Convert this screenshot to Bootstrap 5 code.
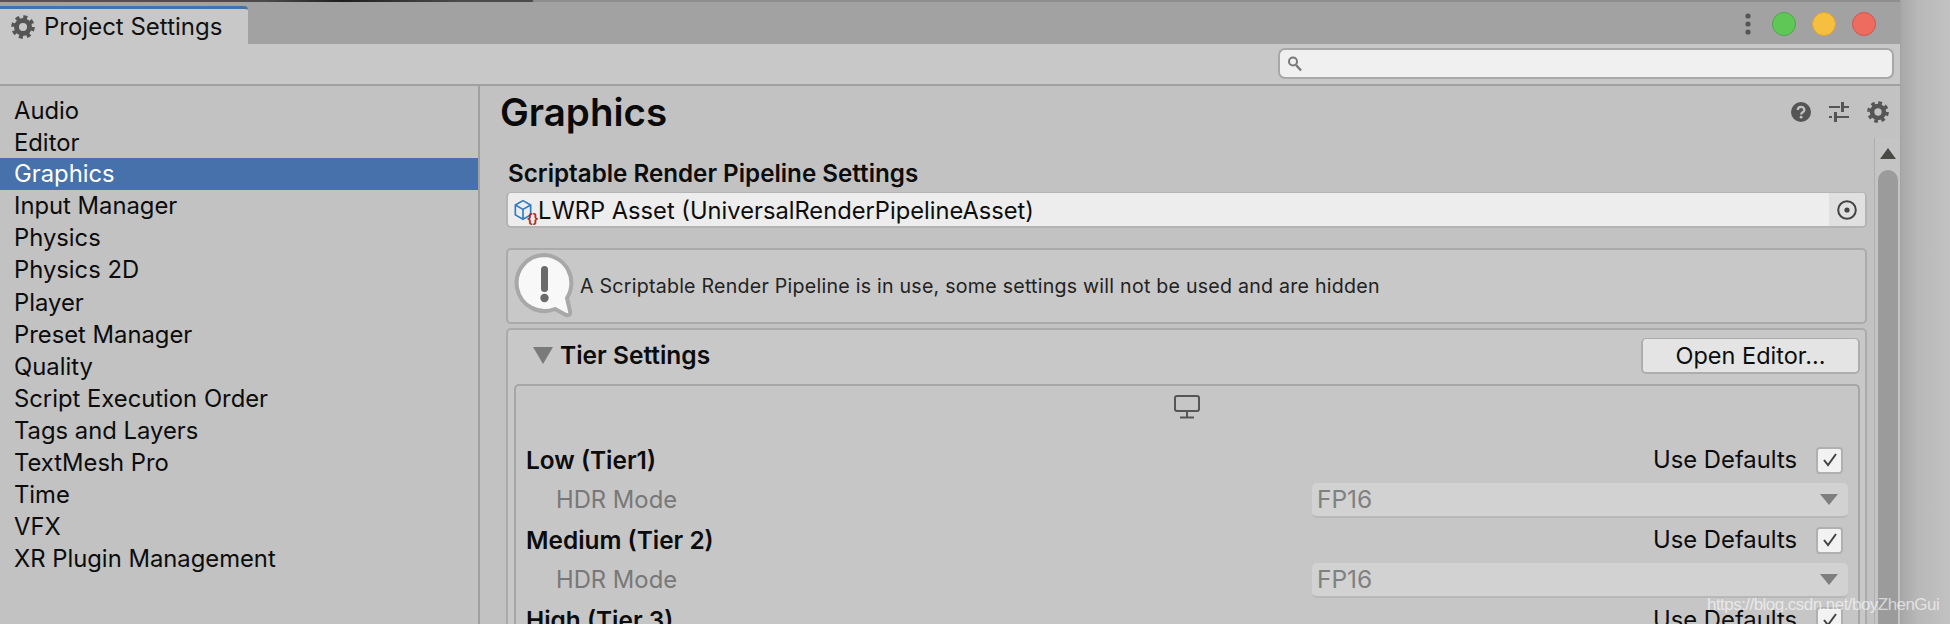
<!DOCTYPE html>
<html lang="en">
<head>
<meta charset="utf-8">
<title>Project Settings</title>
<link href="https://cdn.jsdelivr.net/npm/bootstrap@5.3.0/dist/css/bootstrap.min.css" rel="stylesheet">
<style>
html,body{height:624px;overflow:hidden}
body{font-family:Inter,"Liberation Sans",sans-serif;background:#c4c4c4;color:#0c0c0c}
.stage{height:624px;width:1950px}
.unity{width:1901px;height:624px;flex:none;background:#c2c2c2;border-right:1px solid #a3a3a3;overflow:hidden}
.desk{flex:1;background:linear-gradient(90deg,#a8a8a8,#b8b8b8 35%,#c2c2c2)}
.topstrip{height:2px;background:linear-gradient(90deg,#555 0,#4a4a4a 14%,#1e1e1e 18%,#4a4a4a 24%,#4a4a4a 28%,#8f8f8f 28.1%,#8f8f8f 100%)}
.tabbar{height:42px;background:#a2a2a2}
.tabitem{width:248px;height:38px;margin-top:4px;background:#c8c8c8;border-top:3px solid #4472ad;border-top-right-radius:4px;font-size:24px;line-height:30px;padding-left:11px;gap:9px;color:#111}
.winctl{gap:16px;padding-right:24px;height:44px}
.vdots{width:6px;height:22px;margin-right:5px}
.lamp{width:24px;height:24px;border-radius:50%;border:1px solid}
.lamp-g{background:#5fc756;border-color:#4ca845}
.lamp-y{background:#f6bf3f;border-color:#dca536}
.lamp-r{background:#ee6b60;border-color:#d2584e}
.toolstrip{height:42px;background:#c8c8c8;border-bottom:2px solid #a0a0a0;padding:4px 6px 0 0}
.seek{width:616px;height:31px;background:#f0f0f0;border:2px solid #a8a8a8;border-radius:7px;padding-left:7px}
.bodyrow{height:538px}
.sidelist{width:480px;flex:none;background:#c2c2c2;border-right:2px solid #a0a0a0;padding-top:9px;border-radius:0}
.sideitem{background:transparent;border:0;border-radius:0!important;padding:0 0 0 14px;height:32.1px;line-height:31px;font-size:23.8px;color:#0c0c0c}
.sideitem.active{background:#4671aa;color:#fff}
.pane{min-width:0}
.panehead{height:52px;padding:0 11px 0 20px}
.panetitle{font-size:38.5px;font-weight:600;margin:0;line-height:52px;color:#0a0a0a}
.headtools{gap:18px}
.scrollarea{min-height:0}
.inspector{padding:0 7px 0 26px;min-width:0}
.vbar{width:26px;flex:none;background:#c4c4c4;border-left:1px solid #aeaeae;padding:10px 2px 0 3px}
.vbar-up{width:0;height:0;border-left:8px solid transparent;border-right:8px solid transparent;border-bottom:11px solid #4a4a44;margin:0 auto 11px}
.vbar-thumb{height:500px;background:#9b9b9b;border-radius:10px 10px 0 0}
.seclabel{font-size:24.2px;font-weight:600;line-height:28px;padding:22px 0 4px 2px}
.objfield{height:36px;background:#ededed;border:2px solid #b4b4b4;border-top-width:1px;border-radius:5px;font-size:23.7px;line-height:35px;padding-left:5px;overflow:hidden}
.objpick{width:36px;background:#e0e0e0}
.cubemark{width:25px;height:33px;flex:none;position:relative;padding-top:6px}
.cubemark svg{display:block}
.braces{position:absolute;right:0;bottom:1px;font-size:13px;font-weight:700;color:#b32a22;line-height:14px;letter-spacing:-.5px}
.noticebox{height:76px;margin-top:20px;background:#c8c8c8;border:2px solid #aaa;border-radius:5px;padding-left:5px;gap:5px;font-size:19.6px;letter-spacing:.24px;color:#222}
.noticetext{padding-top:2px}
.tierbox{margin-top:4px;background:#c8c8c8;border:2px solid #aaa;border-radius:5px;padding:0 5px 0 6px;height:400px}
.tierhead{height:54px;padding:0 0 3px 19px}
.fold{width:0;height:0;border-left:10px solid transparent;border-right:10px solid transparent;border-top:17px solid #7a7a7a}
.foldgap{gap:7px}
.tiertitle{font-size:24.5px;font-weight:600;line-height:28px;padding-bottom:2px}
.openbtn{width:219px;height:36px;padding:0;background:#e4e4e4;border:2px solid #adadad;border-top-width:1px;border-radius:5px;font-size:23.5px;line-height:31px;color:#0c0c0c}
.tierinner{border:2px solid #a6a6a6;border-bottom:0;border-radius:5px 5px 0 0;padding:7px 10px 0 10px;height:340px;background:#c6c6c6}
.screenmark{height:47px}
.tierline{height:40px;font-size:23.8px}
.tiername{font-weight:600;font-size:24.4px}
.usedef{gap:19px;margin-right:5px}
.tick{width:27px;height:27px;background:#f2f2f2;border:2px solid #b0b0b0;border-radius:4px}
.hdrlabel{width:786px;padding-left:30px;color:#787878;flex:none}
.dropish{width:536px;height:35px;background:#d2d2d2;border-bottom:2px solid #b8b8b8;border-radius:5px;padding:0 10px 0 5px;color:#808080;font-size:24.5px;line-height:32px}
.dropmark{width:0;height:0;border-left:9px solid transparent;border-right:9px solid transparent;border-top:11px solid #7e7e7e}
.stamp{position:absolute;left:1707px;top:594px;font-size:17px;letter-spacing:-.54px;line-height:22px;color:#fff;opacity:.6;font-family:"Liberation Sans",sans-serif;white-space:nowrap}
</style>
</head>
<body class="m-0">
<div class="stage d-flex position-relative">
  <div class="unity d-flex flex-column">
    <div class="topstrip"></div>
    <div class="tabbar d-flex justify-content-between">
      <div class="tabitem d-flex align-items-center">
        <svg width="24" height="24" viewBox="0 0 24 24"><circle cx="12" cy="12" r="6.5" fill="none" stroke="#555" stroke-width="5"/><circle cx="12" cy="12" r="10" fill="none" stroke="#555" stroke-width="3.6" stroke-dasharray="4 3.85"/></svg>
        <span>Project Settings</span>
      </div>
      <div class="winctl d-flex align-items-center">
        <svg class="vdots" viewBox="0 0 6 22"><circle cx="3" cy="3" r="2.6" fill="#555"/><circle cx="3" cy="11" r="2.6" fill="#555"/><circle cx="3" cy="19" r="2.6" fill="#555"/></svg>
        <span class="lamp lamp-g"></span><span class="lamp lamp-y"></span><span class="lamp lamp-r"></span>
      </div>
    </div>
    <div class="toolstrip d-flex justify-content-end">
      <div class="seek d-flex align-items-center">
        <svg width="16" height="17" viewBox="0 0 16 17"><circle cx="6" cy="6.5" r="4" fill="none" stroke="#777" stroke-width="2"/><path d="M9 10l5 5.5" stroke="#777" stroke-width="2.4"/></svg>
      </div>
    </div>
    <div class="bodyrow d-flex">
      <div class="sidelist list-group">
        <a class="sideitem list-group-item">Audio</a>
        <a class="sideitem list-group-item">Editor</a>
        <a class="sideitem list-group-item active">Graphics</a>
        <a class="sideitem list-group-item">Input Manager</a>
        <a class="sideitem list-group-item">Physics</a>
        <a class="sideitem list-group-item">Physics 2D</a>
        <a class="sideitem list-group-item">Player</a>
        <a class="sideitem list-group-item">Preset Manager</a>
        <a class="sideitem list-group-item">Quality</a>
        <a class="sideitem list-group-item">Script Execution Order</a>
        <a class="sideitem list-group-item">Tags and Layers</a>
        <a class="sideitem list-group-item">TextMesh Pro</a>
        <a class="sideitem list-group-item">Time</a>
        <a class="sideitem list-group-item">VFX</a>
        <a class="sideitem list-group-item">XR Plugin Management</a>
      </div>
      <div class="pane flex-grow-1 d-flex flex-column">
        <div class="panehead d-flex justify-content-between align-items-center">
          <h1 class="panetitle">Graphics</h1>
          <div class="headtools d-flex align-items-center">
            <svg width="20" height="20" viewBox="0 0 20 20"><circle cx="10" cy="10" r="10" fill="#555"/><path d="M6.8 8c0-4.2 6.6-4.2 6.6 0 0 2.3-3.3 2.2-3.3 4.4" fill="none" stroke="#c2c2c2" stroke-width="2.2"/><circle cx="10.1" cy="15.2" r="1.4" fill="#c2c2c2"/></svg>
            <svg width="20" height="20" viewBox="0 0 20 20" fill="#555"><rect x="0" y="4" width="11" height="2"/><rect x="12" y="0" width="3" height="10"/><rect x="15" y="4" width="5" height="2"/><rect x="0" y="14" width="3" height="2"/><rect x="5" y="10" width="3" height="10"/><rect x="8" y="14" width="12" height="2"/></svg>
            <svg width="22" height="22" viewBox="0 0 24 24"><circle cx="12" cy="12" r="6.5" fill="none" stroke="#555" stroke-width="5"/><circle cx="12" cy="12" r="10" fill="none" stroke="#555" stroke-width="3.6" stroke-dasharray="4 3.85"/></svg>
          </div>
        </div>
        <div class="scrollarea d-flex flex-grow-1">
          <div class="inspector flex-grow-1">
            <div class="seclabel">Scriptable Render Pipeline Settings</div>
            <div class="objfield d-flex justify-content-between">
              <div class="d-flex">
                <div class="cubemark">
                  <svg width="20" height="23" viewBox="0 0 18 21"><path d="M9 1.5l7 4v9l-7 4-7-4v-9zM2 5.5l7 4 7-4M9 9.5v9" fill="none" stroke="#2f7bc4" stroke-width="1.5"/></svg>
                  <span class="braces">{}</span>
                </div>
                <span>LWRP Asset (UniversalRenderPipelineAsset)</span>
              </div>
              <div class="objpick d-flex align-items-center justify-content-center">
                <svg width="20" height="20" viewBox="0 0 20 20"><circle cx="10" cy="10" r="8.8" fill="none" stroke="#444" stroke-width="2"/><circle cx="10" cy="10" r="2.6" fill="#444"/></svg>
              </div>
            </div>
            <div class="noticebox d-flex align-items-center">
              <svg width="62" height="68" viewBox="0 0 62 68"><path d="M31 3a28 28 0 1 0 11 54l11 6c3 1 5-1 4-4l-3-13A28 28 0 0 0 31 3z" fill="#f8f8f8" stroke="#a8a8a8" stroke-width="4"/><rect x="28" y="14" width="7" height="26" rx="3.5" fill="#6a6a6a"/><circle cx="31.5" cy="46" r="4.2" fill="#6a6a6a"/></svg>
              <span class="noticetext">A Scriptable Render Pipeline is in use, some settings will not be used and are hidden</span>
            </div>
            <div class="tierbox">
              <div class="tierhead d-flex align-items-center justify-content-between">
                <div class="d-flex align-items-center foldgap">
                  <span class="fold"></span><span class="tiertitle">Tier Settings</span>
                </div>
                <button type="button" class="btn openbtn">Open Editor...</button>
              </div>
              <div class="tierinner">
                <div class="screenmark text-center">
                  <svg width="28" height="26" viewBox="0 0 28 26"><rect x="2" y="2" width="24" height="15" rx="2" fill="none" stroke="#555" stroke-width="2"/><path d="M14 17v6M7 23.5h14" stroke="#555" stroke-width="2"/></svg>
                </div>
                <div class="tierline d-flex justify-content-between align-items-center">
                  <span class="tiername">Low (Tier1)</span>
                  <div class="usedef d-flex align-items-center"><span>Use Defaults</span><span class="tick d-flex align-items-center justify-content-center"><svg width="16" height="16" viewBox="0 0 16 16"><path d="M2 8l4 5 8-11" fill="none" stroke="#444" stroke-width="2"/></svg></span></div>
                </div>
                <div class="tierline d-flex align-items-center">
                  <span class="hdrlabel">HDR Mode</span>
                  <div class="dropish d-flex justify-content-between align-items-center"><span>FP16</span><span class="dropmark"></span></div>
                </div>
                <div class="tierline d-flex justify-content-between align-items-center">
                  <span class="tiername">Medium (Tier 2)</span>
                  <div class="usedef d-flex align-items-center"><span>Use Defaults</span><span class="tick d-flex align-items-center justify-content-center"><svg width="16" height="16" viewBox="0 0 16 16"><path d="M2 8l4 5 8-11" fill="none" stroke="#444" stroke-width="2"/></svg></span></div>
                </div>
                <div class="tierline d-flex align-items-center">
                  <span class="hdrlabel">HDR Mode</span>
                  <div class="dropish d-flex justify-content-between align-items-center"><span>FP16</span><span class="dropmark"></span></div>
                </div>
                <div class="tierline d-flex justify-content-between align-items-center">
                  <span class="tiername">High (Tier 3)</span>
                  <div class="usedef d-flex align-items-center"><span>Use Defaults</span><span class="tick d-flex align-items-center justify-content-center"><svg width="16" height="16" viewBox="0 0 16 16"><path d="M2 8l4 5 8-11" fill="none" stroke="#444" stroke-width="2"/></svg></span></div>
                </div>
              </div>
            </div>
          </div>
          <div class="vbar">
            <div class="vbar-up"></div>
            <div class="vbar-thumb"></div>
          </div>
        </div>
      </div>
    </div>
  </div>
  <div class="desk"></div>
  <div class="stamp">https://blog.csdn.net/boyZhenGui</div>
</div>
<script src="https://cdn.jsdelivr.net/npm/bootstrap@5.3.0/dist/js/bootstrap.bundle.min.js"></script>
</body>
</html>
